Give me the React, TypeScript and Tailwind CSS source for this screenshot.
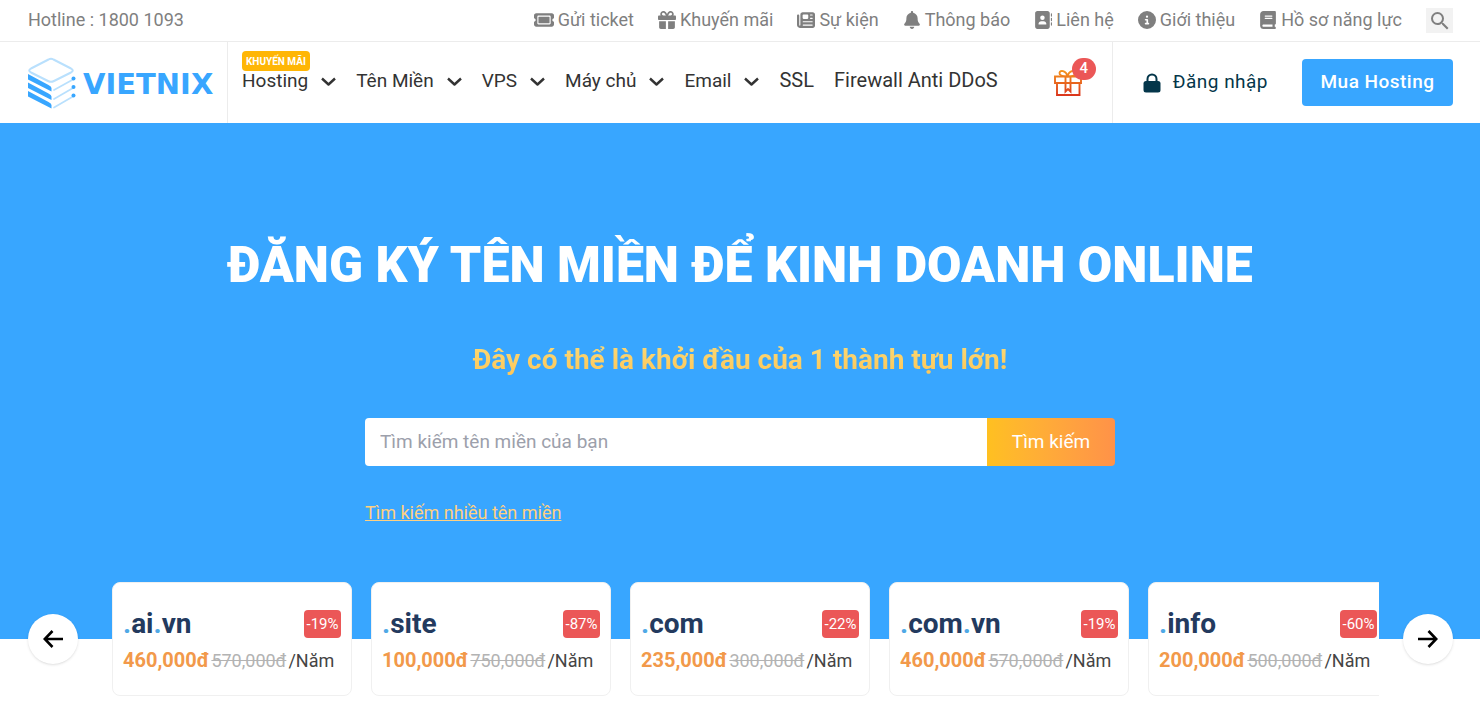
import React from 'react';
import { FaTicket, FaGift, FaNewspaper, FaBell, FaAddressBook, FaCircleInfo, FaBook } from 'react-icons/fa6';
import { MdSearch } from 'react-icons/md';

const topLinks = [
  { label: 'Gửi ticket', icon: FaTicket, size: 20 },
  { label: 'Khuyến mãi', icon: FaGift, size: 18 },
  { label: 'Sự kiện', icon: FaNewspaper, size: 18 },
  { label: 'Thông báo', icon: FaBell, size: 18 },
  { label: 'Liên hệ', icon: FaAddressBook, size: 18 },
  { label: 'Giới thiệu', icon: FaCircleInfo, size: 18 },
  { label: 'Hồ sơ năng lực', icon: FaBook, size: 18 },
];

const navItems = [
  { label: 'Hosting', menu: true, tag: 'KHUYẾN MÃI' },
  { label: 'Tên Miền', menu: true },
  { label: 'VPS', menu: true },
  { label: 'Máy chủ', menu: true },
  { label: 'Email', menu: true },
  { label: 'SSL', menu: false },
  { label: 'Firewall Anti DDoS', menu: false },
];

const domains = [
  { name: '.ai.vn', off: '-19%', price: '460,000đ', old: '570,000đ' },
  { name: '.site', off: '-87%', price: '100,000đ', old: '750,000đ' },
  { name: '.com', off: '-22%', price: '235,000đ', old: '300,000đ' },
  { name: '.com.vn', off: '-19%', price: '460,000đ', old: '570,000đ' },
  { name: '.info', off: '-60%', price: '200,000đ', old: '500,000đ' },
];

function Logo() {
  return (
    <svg width="188" height="54" viewBox="0 0 188 54" role="img" aria-label="Vietnix">
      <g fill="none" stroke="#b9e0fd" strokeLinejoin="round" strokeLinecap="round">
        <path d="M20.5 3.5Q23 2 25.500 3.500L43 12.500Q46.500 14.500 43 16.500L26 25Q23 26.500 20 25L3 16.500Q-.5 14.500 3 12.500Z" strokeWidth="2" />
        <path d="M26 34L45 23.500M26 43L45 32M26 51.500L45 40.500" strokeWidth="1.700" />
      </g>
      <g fill="#38a6ff">
        <path d="M0 18L20.500 29Q23.500 30.500 23.500 32V35.500L0 23.500Z" />
        <path d="M0 26.500L20.500 37.500Q23.500 39 23.500 40.500V44L0 32Z" />
        <path d="M0 35L20.500 46Q23.500 47.500 23.500 49V52.500L0 40.500Z" />
        <circle cx="45.500" cy="22.500" r="2" />
        <circle cx="45.500" cy="31" r="2" />
        <circle cx="45.500" cy="39.500" r="2" />
      </g>
      <text x="55" y="38" fill="#38a6ff" className="font-['DejaVu_Sans',sans-serif] text-[29px] font-bold">
        VIETNIX
      </text>
    </svg>
  );
}

function Chevron() {
  return (
    <svg width="15" height="10" viewBox="0 0 15 10" fill="none" stroke="#333" strokeWidth="2.400" aria-hidden="true">
      <path d="M1 1.500L7.500 7.500L14 1.500" strokeLinejoin="round" />
    </svg>
  );
}

function GiftOutline() {
  return (
    <svg width="28" height="28" viewBox="0 0 28 28" fill="none" stroke="url(#gift)" strokeWidth="1.900" aria-hidden="true">
      <defs>
        <linearGradient id="gift" x1="0" y1="0" x2="0" y2="28" gradientUnits="userSpaceOnUse">
          <stop offset="0" stopColor="#f79a1e" />
          <stop offset="1" stopColor="#d9301c" />
        </linearGradient>
      </defs>
      <path d="M1 7.500H27V14H1ZM3 14V26H25.500V14" />
      <path d="M11.500 8V22.500L14 20L16.500 22.500V8" />
      <path d="M13.500 7.500C12 1.500 6 .5 5.500 4C5.200 6 8 7.500 13.500 7.500C15 1.500 21 .5 21.500 4C21.800 6 19 7.500 13.500 7.500" />
    </svg>
  );
}

function Lock() {
  return (
    <svg width="18" height="20" viewBox="0 0 18 20" aria-hidden="true">
      <rect x=".5" y="8" width="17" height="11.500" rx="2.500" fill="#04364a" />
      <path d="M4.500 9V6A4.500 4.500 0 0 1 13.500 6V9" fill="none" stroke="#04364a" strokeWidth="2" />
    </svg>
  );
}

function Arrow({ flip }: { flip?: boolean }) {
  return (
    <svg width="20" height="18" viewBox="0 0 20 18" fill="none" stroke="#000" strokeWidth="2.600" className={flip ? 'rotate-180' : ''} aria-hidden="true">
      <path d="M20 9H2M9.500 1L1.800 9L9.500 17" />
    </svg>
  );
}

function TopBar() {
  return (
    <div className="flex h-[42px] items-center justify-between border-b border-[#ececec] pl-7 pr-[27px] text-[18px] text-[#7f7f7f]">
      <a href="tel:18001093" className="pb-0.5">Hotline : 1800 1093</a>
      <div className="flex items-center gap-6">
        {topLinks.map(({ label, icon: Icon, size }) => (
          <a key={label} href="#" className="flex items-center gap-1 pb-0.5">
            <Icon size={size} />
            {label}
          </a>
        ))}
        <button type="button" aria-label="Tìm kiếm" className="flex h-[25px] w-[27px] items-center justify-center bg-[#f2f2f2]">
          <MdSearch size={24} />
        </button>
      </div>
    </div>
  );
}

function Header() {
  return (
    <header className="flex h-[81px] items-stretch">
      <a href="#" className="flex w-[228px] shrink-0 items-center border-r border-[#ececec] pl-7">
        <Logo />
      </a>
      <nav className="flex grow items-baseline gap-5 self-center pb-1 pl-3.5 text-[19px] text-[#333]">
        {navItems.map((item) => (
          <a key={item.label} href="#" className={item.menu ? 'relative flex items-center gap-[13px]' : 'text-[20px]'}>
            {item.tag && (
              <span className="absolute -top-4 left-0 flex h-5 items-center whitespace-nowrap rounded bg-[#ffb606] px-1 text-[10px] font-bold text-white">
                {item.tag}
              </span>
            )}
            {item.label}
            {item.menu && <Chevron />}
          </a>
        ))}
      </nav>
      <div className="flex items-center border-r border-[#ececec] pr-[30px]">
        <a href="#" aria-label="Quà tặng" className="relative">
          <GiftOutline />
          <span className="absolute -top-[11px] left-[18px] flex h-[22px] w-6 items-center justify-center rounded-full bg-[#eb5757] text-[15px] font-medium text-white">
            4
          </span>
        </a>
      </div>
      <div className="flex items-center pl-[30px] pr-[27px]">
        <a href="#" className="flex items-center gap-3 text-[19px] tracking-wide text-[#04364a]">
          <Lock />
          Đăng nhập
        </a>
        <a href="#" className="ml-[34px] flex h-[47px] w-[151px] items-center justify-center rounded bg-[#38a6ff] text-[19px] font-medium tracking-wide text-white">
          Mua Hosting
        </a>
      </div>
    </header>
  );
}

function DomainCard({ domain }: { domain: (typeof domains)[number] }) {
  return (
    <li className="h-[114px] w-[240px] shrink-0 rounded-lg border border-[#f0f0f0] bg-white px-2.5 pt-[26px]">
      <div className="flex items-center justify-between">
        <h3 className="text-[28px] leading-[30px] font-bold text-[#233a5e]">
          {domain.name.split(/(\.)/).filter(Boolean).map((part, i) => (
            <span key={i} className={part === '.' ? 'text-[#4fa9e6]' : ''}>{part}</span>
          ))}
        </h3>
        <span className="flex h-7 w-[37px] items-center justify-center rounded bg-[#eb5757] text-[15px] text-white">
          {domain.off}
        </span>
      </div>
      <p className="mt-[7px] flex items-baseline gap-0.5 whitespace-nowrap text-[18px] leading-7">
        <strong className="text-[20px] font-bold text-[#f2994a]">{domain.price}</strong>
        <del className="text-[#b3b3b3]">{domain.old}</del>
        <span className="text-[#444]">/Năm</span>
      </p>
    </li>
  );
}

function Hero() {
  return (
    <section className="bg-[#38a6ff] pb-28 pt-[107px] text-center">
      <h1 className="text-[50px] leading-[70px] font-black text-white">
        ĐĂNG KÝ TÊN MIỀN ĐỂ KINH DOANH ONLINE
      </h1>
      <p className="mt-10 bg-gradient-to-b from-[#f9dc7b] to-[#ffc350] bg-clip-text text-[28px] leading-10 font-bold text-transparent">
        Đây có thể là khởi đầu của 1 thành tựu lớn!
      </p>
      <form className="mx-auto mt-[38px] flex h-12 max-w-[750px]" onSubmit={(e) => e.preventDefault()}>
        <input
          type="text"
          aria-label="Tên miền"
          placeholder="Tìm kiếm tên miền của bạn"
          className="min-w-0 grow rounded-l bg-white px-[15px] text-[19px] text-[#333] outline-none placeholder:text-[#9ca0ab]"
        />
        <button type="submit" className="w-32 rounded-r bg-gradient-to-r from-[#ffc020] to-[#ff9248] text-[19px] text-white">
          Tìm kiếm
        </button>
      </form>
      <div className="mx-auto mt-[33px] max-w-[750px] text-left text-[18px] leading-[28px]">
        <a href="#" className="text-[#ffd080] underline">Tìm kiếm nhiều tên miền</a>
      </div>
    </section>
  );
}

function App() {
  return (
    <div className="overflow-x-hidden bg-white font-[Roboto,sans-serif]">
      <TopBar />
      <Header />
      <Hero />
      <div className="relative -mt-[57px] flex items-center justify-between gap-[34px] pl-7 pr-[27px]">
        <button type="button" aria-label="Trước" className="flex size-[50px] shrink-0 items-center justify-center rounded-full bg-white shadow">
          <Arrow />
        </button>
        <ul className="flex min-w-0 grow gap-[19px] overflow-hidden">
          {domains.map((domain) => (
            <DomainCard key={domain.name} domain={domain} />
          ))}
        </ul>
        <button type="button" aria-label="Sau" className="-ml-2.5 flex size-[50px] shrink-0 items-center justify-center rounded-full bg-white shadow">
          <Arrow flip />
        </button>
      </div>
    </div>
  );
}

export default App;
